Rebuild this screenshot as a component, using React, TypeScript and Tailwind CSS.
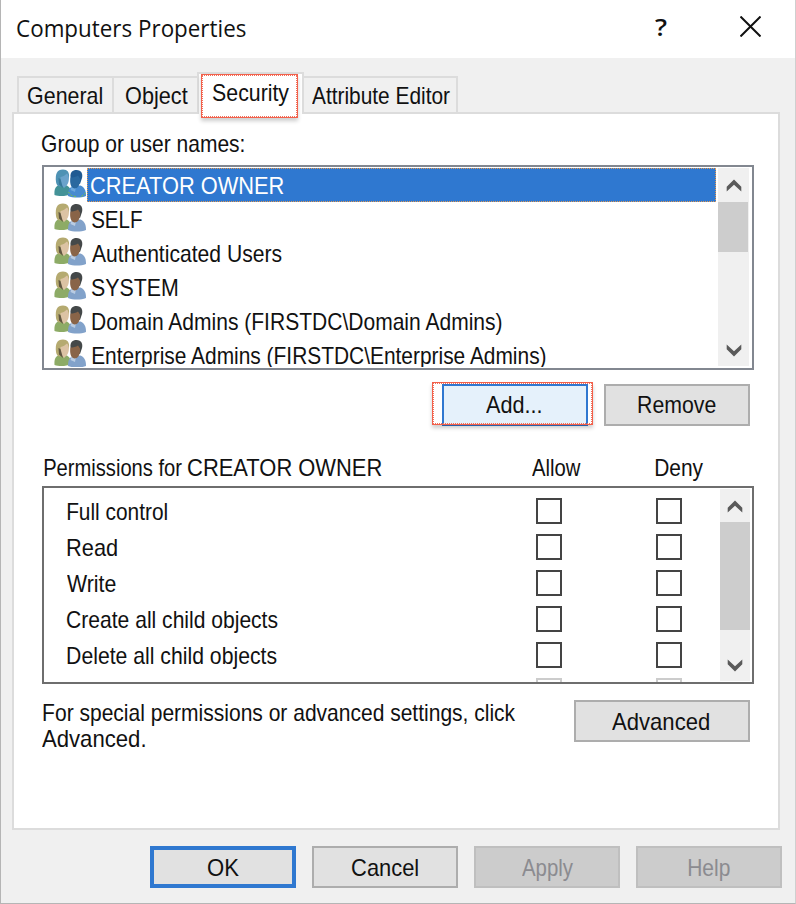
import React from "react";

const measureContext = document.createElement("canvas").getContext("2d")!;

const FONTS = {
  ui: '"Liberation Sans", Arial, sans-serif',
  title: '"Open Sans", "Noto Sans", sans-serif',
};

/* A single line of text condensed horizontally so that its ink is `width` pixels wide. */
function T({
  children,
  width,
  font = "ui",
  className = "",
}: {
  children: string;
  width: number;
  font?: "ui" | "title";
  className?: string;
}) {
  measureContext.font = `24px ${FONTS[font]}`;
  const m = measureContext.measureText(children);
  const scale = width / (m.actualBoundingBoxLeft + m.actualBoundingBoxRight);
  const shift = m.actualBoundingBoxLeft * scale;
  return (
    <span className={`block shrink-0 whitespace-pre text-[24px] ${className}`} style={{ width }}>
      <span
        className={`block w-max origin-left ${
          font === "title" ? "font-['Open_Sans','Noto_Sans',sans-serif]" : "font-['Liberation_Sans',Arial,sans-serif]"
        }`}
        style={{ transform: `translateX(${shift}px) scaleX(${scale})` }}
      >
        {children}
      </span>
    </span>
  );
}

function UsersIcon({ selected = false }: { selected?: boolean }) {
  const c = selected
    ? { hair: "#4e92b4", face: "#6ba3cb", shade: "#37789a", top: "#439297", hair2: "#205a92", face2: "#2a689f", top2: "#478bd0", shirt: "#6ea8dd" }
    : { hair: "#b5aa70", face: "#dcc3a4", shade: "#5f5540", top: "#8dab66", hair2: "#444849", face2: "#896448", top2: "#82a2ca", shirt: "#b9cce3" };
  return (
    <svg className="h-[30px] w-[32px] shrink-0" viewBox="0 0 32 30">
      <path d="M0.500 27C0 21 1.500 18 6 16.500L13 17.500C16 19 17 22 17 26C12 28.500 5 28.500 0.500 27Z" fill={c.top} />
      <path d="M2 14C1 6 3 1.500 9 1.500C13.500 1.500 15.500 4.500 15 9L12 18L5 18.500C3 17.500 2.500 16 2 14Z" fill={c.hair} />
      <path d="M6.500 9C9 8.500 11.500 7 13 5.500C15.500 8 15.500 14 13 17L10 20L6.500 16Z" fill={c.face} />
      <path d="M4.500 10L6.500 11L9 20L5 16.500Z" fill={c.shade} />
      <path d="M14 28C14 23 15 19.500 19 18L26.500 17.500C31 19.500 32 23 32 28C27 30 19 30 14 28Z" fill={c.top2} />
      <path d="M17.500 18.500L22 19L21 24L16.500 22Z" fill={c.shirt} />
      <path d="M16.500 9C16 4.500 18.500 2 22.500 2C27.500 2 29 6 28 10L26 16L17 13Z" fill={c.hair2} />
      <path d="M16.500 9.500C19 9.500 22 9 24 7.500L26 10.500C26.500 15.500 24.500 20.500 20.500 20.500C16.500 20 15.500 14 16.500 9.500Z" fill={c.face2} />
      {selected && <path d="M14.500 24L17.500 27.500L22 28.700M27.500 28.500L31.500 25" stroke="#7fca3c" strokeWidth="1" fill="none" strokeDasharray="2 1.500" />}
    </svg>
  );
}

function Chevron({ down = false }: { down?: boolean }) {
  return (
    <svg className={`h-[13px] w-[16px] ${down ? "rotate-180" : ""}`} viewBox="0 0 16 13">
      <path d="M0.700 7.700L8 0.400L15.300 7.700V12.600L8 5.700L0.700 12.600Z" fill="#5a5a5a" />
    </svg>
  );
}

function CheckBox({ faint = false }: { faint?: boolean }) {
  return <div className={`size-[26px] shrink-0 border-2 bg-white ${faint ? "border-[#cccccc]" : "border-[#444444]"}`} />;
}

function Button({ label, text, className = "" }: { label: string; text: number; className?: string }) {
  return (
    <button className={`flex h-[42px] shrink-0 items-center justify-center ${className}`}>
      <T width={text} className="leading-[34px]">
        {label}
      </T>
    </button>
  );
}

function RedFrame({ className }: { className: string }) {
  return (
    <div className={`pointer-events-none absolute border border-[#f2604b] shadow-[0_3px_4px_rgba(0,0,0,0.2)] ${className}`}>
      <div className="h-full w-full border border-dotted border-[#f0705c]" />
    </div>
  );
}

const NORMAL = "border-2 border-[#adadad] bg-[#e1e1e1] text-[#111]";
const DISABLED = "border-2 border-[#bfbfbf] bg-[#cccccc] text-[#8b8b90]";

const PRINCIPALS: [string, number][] = [
  ["CREATOR OWNER", 193],
  ["SELF", 50],
  ["Authenticated Users", 190],
  ["SYSTEM", 86],
  ["Domain Admins (FIRSTDC\\Domain Admins)", 412],
  ["Enterprise Admins (FIRSTDC\\Enterprise Admins)", 456],
];

const PERMISSIONS: [string, number][] = [
  ["Full control", 100],
  ["Read", 50],
  ["Write", 49],
  ["Create all child objects", 211],
  ["Delete all child objects", 210],
];

export default function App() {
  return (
    <div className="flex h-[904px] w-[796px] flex-col overflow-hidden border border-t-0 border-[#b5b5b5] border-r-[#cfcfcf] bg-[#f0f0f0] text-[#111]">
      <header className="flex h-[58px] shrink-0 bg-white pl-4">
        <T width={229} font="title" className="leading-[55px]">
          Computers Properties
        </T>
        <T width={11} font="title" className="ml-[409px] leading-[53px] font-semibold">
          ?
        </T>
        <svg className="mt-[16px] ml-[74px] size-[21px] shrink-0" viewBox="0 0 21 21">
          <path d="M0.500 0.500L20.500 20.500M20.500 0.500L0.500 20.500" stroke="#111" strokeWidth="2" />
        </svg>
      </header>

      <div className="flex h-[54px] shrink-0 items-end pl-4">
        <div className="flex h-[36px] w-[97px] border-2 border-b-0 border-[#dcdcdc] pl-[9px]">
          <T width={74} className="leading-[36px]">General</T>
        </div>
        <div className="flex h-[36px] w-[83px] border-t-2 border-[#dcdcdc] pl-[12px]">
          <T width={62} className="leading-[36px]">Object</T>
        </div>
        <div className="relative z-10 -mb-[2px] flex h-[42px] w-[107px] border-2 border-b-0 border-[#dcdcdc] bg-white pl-[14px]">
          <T width={76} className="leading-[38px]">Security</T>
          <RedFrame className="top-0 left-[2px] h-[44px] w-[97px]" />
        </div>
        <div className="flex h-[36px] w-[154px] border-t-2 border-r-2 border-[#dcdcdc] pl-[8px]">
          <T width={138} className="leading-[36px]">Attribute Editor</T>
        </div>
      </div>

      <main className="ml-[11px] flex h-[718px] w-[768px] shrink-0 flex-col border-2 border-[#dcdcdc] bg-white pl-[28px]">
        <T width={202} className="mt-[13px] h-[38px] leading-[34px]">Group or user names:</T>

        <div className="flex h-[205px] w-[712px] shrink-0 overflow-hidden border-2 border-[#828790] py-px pl-[10px]">
          <ul className="w-[662px] shrink-0 overflow-hidden">
            {PRINCIPALS.map(([name, w], i) => (
              <li key={name} className="flex h-[34px]">
                <UsersIcon selected={i === 0} />
                <div
                  className={
                    i === 0
                      ? "ml-px h-[34px] flex-1 border border-dotted border-[#e39a52] bg-[#2f78d0] pl-[3px] text-white"
                      : "ml-px h-[34px] flex-1 py-px pl-[5px]"
                  }
                >
                  <T width={w} className="leading-[33px]">{name}</T>
                </div>
              </li>
            ))}
          </ul>
          <div className="ml-[2px] flex h-[198px] w-[31px] flex-col items-center bg-[#f0f0f0] pt-[11px]">
            <Chevron />
            <div className="mt-[10px] h-[50px] w-[30px] self-start bg-[#cdcdcd]" />
            <div className="mt-[92px]">
              <Chevron down />
            </div>
          </div>
        </div>

        <div className="relative mt-[14px] flex shrink-0 gap-4 pl-[400px]">
          <Button label="Add..." text={55} className="w-[146px] border-2 border-[#2f78d0] bg-[#e5f1fb] pr-[3px]" />
          <Button label="Remove" text={78} className={`w-[146px] ${NORMAL}`} />
          <RedFrame className="top-[-2px] left-[390px] h-[43px] w-[161px]" />
        </div>

        <div className="mt-[25px] flex h-[35px] shrink-0 pl-[2px]">
          <T width={138} className="leading-[34px]">Permissions for</T>
          <T width={194} className="ml-[6px] leading-[34px]">CREATOR OWNER</T>
          <T width={49} className="ml-[150px] leading-[34px]">Allow</T>
          <T width={48} className="ml-[74px] leading-[34px]">Deny</T>
        </div>

        <div className="flex h-[198px] w-[712px] shrink-0 overflow-hidden border-2 border-[#6e6e6e] pl-[22px]">
          <div className="w-[654px] shrink-0 overflow-hidden pt-[5px]">
            {PERMISSIONS.map(([name, w]) => (
              <div key={name} className="flex h-[36px] items-center">
                <div className="w-[470px] pl-px">
                  <T width={w} className="pt-px leading-[37px]">{name}</T>
                </div>
                <CheckBox />
                <div className="w-[94px]" />
                <CheckBox />
              </div>
            ))}
            <div className="flex h-[36px] items-center pl-[470px]">
              <CheckBox faint />
              <div className="w-[94px]" />
              <CheckBox faint />
            </div>
          </div>
          <div className="mt-px flex h-[192px] w-[30px] flex-col items-center bg-[#f0f0f0] pt-[11px]">
            <Chevron />
            <div className="mt-[9px] h-[108px] w-[30px] bg-[#cdcdcd]" />
            <div className="mt-[29px]">
              <Chevron down />
            </div>
          </div>
        </div>

        <div className="mt-4 flex shrink-0">
          <div className="w-[532px]">
            <T width={473} className="ml-px leading-[26px]">For special permissions or advanced settings, click</T>
            <T width={103} className="leading-[26px]">Advanced.</T>
          </div>
          <Button label="Advanced" text={97} className={`w-[176px] pt-px pr-[3px] ${NORMAL}`} />
        </div>
      </main>

      <footer className="mt-4 flex gap-4 pl-[149px]">
        <Button label="OK" text={31} className="w-[146px] border-4 border-[#2f78d0] bg-[#e1e1e1] pt-px" />
        <Button label="Cancel" text={66} className={`w-[146px] pt-px ${NORMAL}`} />
        <Button label="Apply" text={51} className={`w-[146px] pt-px ${DISABLED}`} />
        <Button label="Help" text={42} className={`w-[146px] pt-px ${DISABLED}`} />
      </footer>
    </div>
  );
}
